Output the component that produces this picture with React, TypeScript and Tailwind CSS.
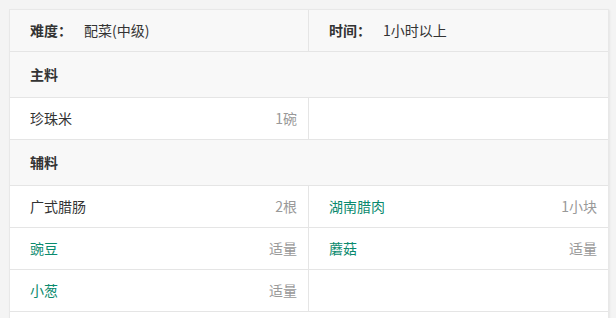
import React from "react";

type Item = { name: string; amount: string; link?: boolean };

const mainItems: Item[] = [{ name: "珍珠米", amount: "1碗" }];

const subItems: Item[] = [
  { name: "广式腊肠", amount: "2根" },
  { name: "湖南腊肉", amount: "1小块", link: true },
  { name: "豌豆", amount: "适量", link: true },
  { name: "蘑菇", amount: "适量", link: true },
  { name: "小葱", amount: "适量", link: true },
];

function Cell({ item, left }: { item?: Item; left: boolean }) {
  return (
    <div
      className={`h-[41px] flex items-center justify-between pl-[20px] ${
        left ? "pr-[11px] border-r border-[#e5e5e5]" : "pr-[11px]"
      }`}
    >
      {item && (
        <>
          <span className={item.link ? "text-[#0a8a6e]" : "text-[#333]"}>
            {item.name}
          </span>
          <span className="text-[#999]">{item.amount}</span>
        </>
      )}
    </div>
  );
}

function Rows({ items }: { items: Item[] }) {
  const rows: Item[][] = [];
  for (let i = 0; i < items.length; i += 2) rows.push(items.slice(i, i + 2));
  return (
    <>
      {rows.map((r, i) => (
        <div key={i} className="grid grid-cols-2 bg-white border-b border-[#e5e5e5]">
          <Cell item={r[0]} left />
          <Cell item={r[1]} left={false} />
        </div>
      ))}
    </>
  );
}

function Heading({ title }: { title: string }) {
  return (
    <div className="h-[46px] flex items-center pl-[20px] bg-[#f8f8f8] border-b border-[#e5e5e5] font-bold text-[#333]">
      {title}
    </div>
  );
}

export default function App() {
  return (
    <div
      className="min-h-[318px] bg-[#f4f4f4] pt-[9px] pl-[9px] text-[14px]"
      style={{ fontFamily: '"Noto Sans CJK SC", "Noto Sans", sans-serif' }}
    >
      <div className="w-[600px] border-l border-t border-r border-[#e8e8e8] shadow-[1px_1px_2px_rgba(0,0,0,0.06)]">
        <div className="grid grid-cols-2 bg-[#f8f8f8] border-b border-[#e5e5e5] text-[#333]">
          <div className="h-[41px] flex items-center pl-[20px] border-r border-[#e5e5e5]">
            <span className="font-bold w-[54px]">难度：</span>
            <span>配菜(中级)</span>
          </div>
          <div className="h-[41px] flex items-center pl-[20px]">
            <span className="font-bold w-[54px]">时间：</span>
            <span>1小时以上</span>
          </div>
        </div>
        <Heading title="主料" />
        <Rows items={mainItems} />
        <Heading title="辅料" />
        <Rows items={subItems} />
        <div className="h-[10px] bg-white" />
      </div>
    </div>
  );
}
